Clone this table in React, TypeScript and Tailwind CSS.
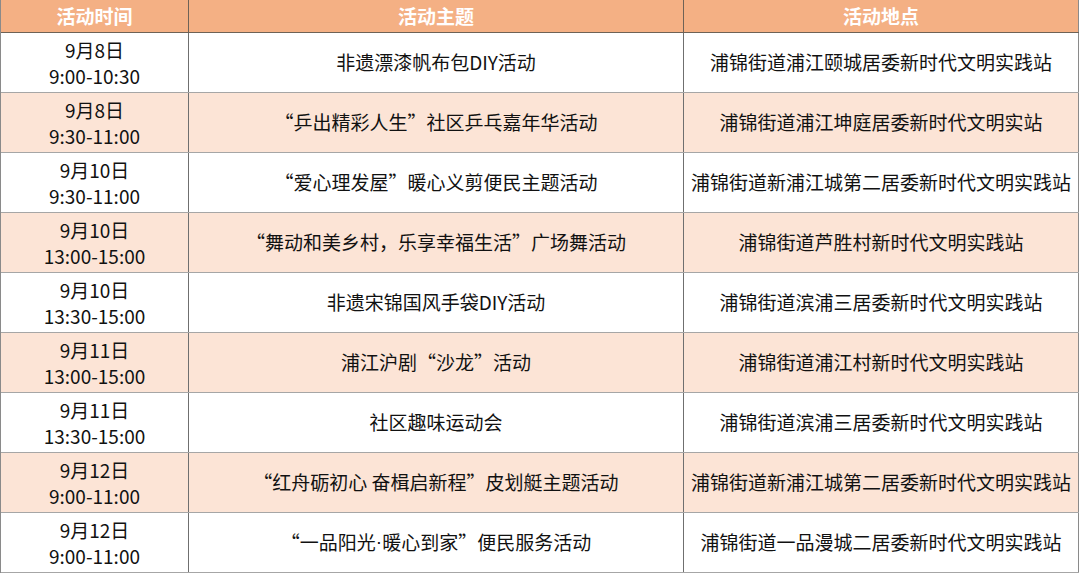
import type { ReactNode } from 'react'

const rows: { date: string; time: string; theme: ReactNode; place: string }[] = [
  { date: '9月8日', time: '9:00-10:30', theme: '非遗漂漆帆布包DIY活动', place: '浦锦街道浦江颐城居委新时代文明实践站' },
  { date: '9月8日', time: '9:30-11:00', theme: '“乒出精彩人生”社区乒乓嘉年华活动', place: '浦锦街道浦江坤庭居委新时代文明实站' },
  { date: '9月10日', time: '9:30-11:00', theme: '“爱心理发屋”暖心义剪便民主题活动', place: '浦锦街道新浦江城第二居委新时代文明实践站' },
  { date: '9月10日', time: '13:00-15:00', theme: '“舞动和美乡村，乐享幸福生活”广场舞活动', place: '浦锦街道芦胜村新时代文明实践站' },
  { date: '9月10日', time: '13:30-15:00', theme: '非遗宋锦国风手袋DIY活动', place: '浦锦街道滨浦三居委新时代文明实践站' },
  { date: '9月11日', time: '13:00-15:00', theme: '浦江沪剧“沙龙”活动', place: '浦锦街道浦江村新时代文明实践站' },
  { date: '9月11日', time: '13:30-15:00', theme: '社区趣味运动会', place: '浦锦街道滨浦三居委新时代文明实践站' },
  { date: '9月12日', time: '9:00-11:00', theme: '“红舟砺初心 奋楫启新程”皮划艇主题活动', place: '浦锦街道新浦江城第二居委新时代文明实践站' },
  {
    date: '9月12日',
    time: '9:00-11:00',
    theme: (
      <>
        “一品阳光<span className="font-['Liberation_Sans']">·</span>暖心到家”便民服务活动
      </>
    ),
    place: '浦锦街道一品漫城二居委新时代文明实践站',
  },
]

export default function App() {
  return (
    <div
      className="w-[1080px] h-[573px] bg-white overflow-hidden text-[#111]"
      style={{ fontFamily: '"Microsoft YaHei", "Noto Sans CJK SC", "Noto Sans", sans-serif' }}
    >
      <div className="w-[1079px] border-l border-[#8a8a8a]">
        {/* 表头 */}
        <div className="grid grid-cols-[188px_495px_1fr] h-[33px] bg-[#f4b084] border-b border-[#6e6256] text-white font-bold text-[19px]">
          <div className="flex items-center justify-center border-r border-[#6e6256]">活动时间</div>
          <div className="flex items-center justify-center border-r border-[#6e6256]">活动主题</div>
          <div className="flex items-center justify-center border-r border-[#8a8a8a]">活动地点</div>
        </div>

        {rows.map((r, i) => (
          <div
            key={i}
            className={`grid grid-cols-[188px_495px_1fr] h-[60px] border-b border-[#a6a6a6] text-[19px] ${
              i % 2 === 1 ? 'bg-[#fce4d6]' : 'bg-white'
            }`}
          >
            <div className="flex flex-col items-center justify-center leading-[26px] border-r border-[#6f6f6f]">
              <span>{r.date}</span>
              <span>{r.time}</span>
            </div>
            <div className="flex items-center justify-center border-r border-[#6f6f6f] whitespace-nowrap">{r.theme}</div>
            <div className="flex items-center justify-center border-r border-[#8a8a8a] whitespace-nowrap">{r.place}</div>
          </div>
        ))}
      </div>
    </div>
  )
}
